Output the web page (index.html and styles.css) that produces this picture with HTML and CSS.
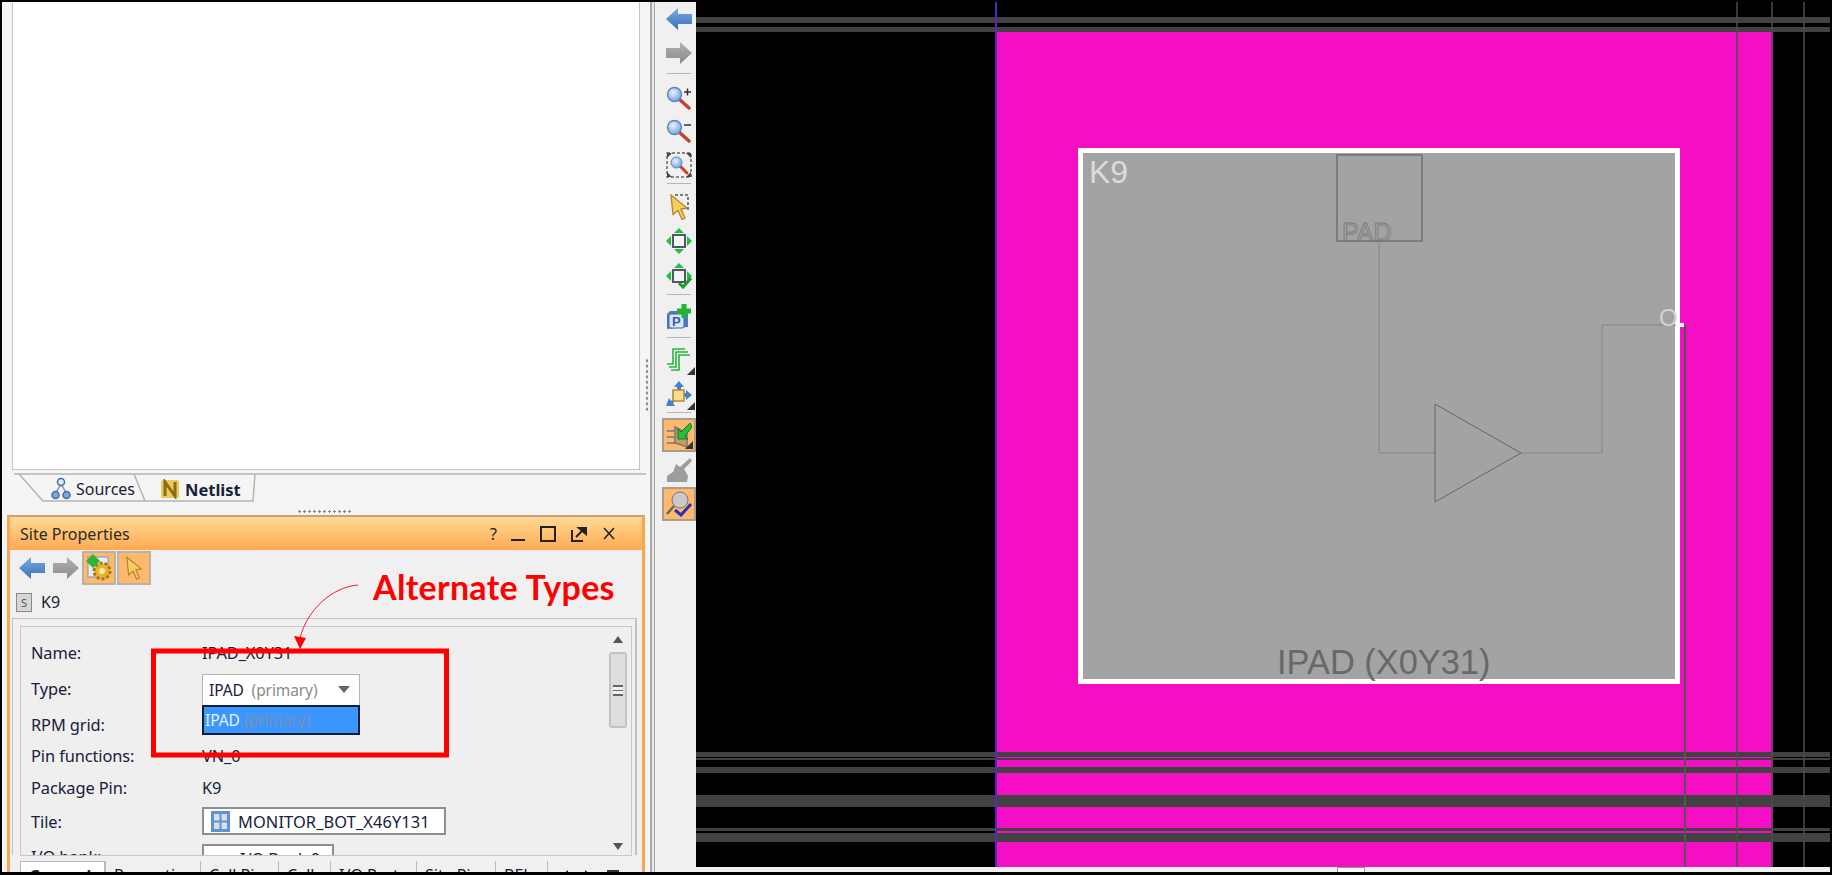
FILE: index.html
```html
<!DOCTYPE html>
<html lang="en">
<head>
    <meta charset="UTF-8">
    <title>Site Properties - Device View</title>
    <link rel="stylesheet" href="styles.css">
</head>
<body>
    <!-- shared icons -->
    <svg class="defs" width="0" height="0">
        <defs>
            <linearGradient id="blueArrow" x1="0" y1="0" x2="0" y2="1"><stop offset="0" stop-color="#79a9e2"/><stop offset="1" stop-color="#3a73b8"/></linearGradient>
            <linearGradient id="grayArrow" x1="0" y1="0" x2="0" y2="1"><stop offset="0" stop-color="#b0b0b0"/><stop offset="1" stop-color="#8c8c8c"/></linearGradient>
            <radialGradient id="lens" cx="0.4" cy="0.35" r="0.7"><stop offset="0" stop-color="#e8f2ff"/><stop offset="1" stop-color="#6f9ee0"/></radialGradient>
            <symbol id="i-back" viewBox="0 0 26 22"><path d="M0 11 12 0v6h14v10H12v6z" fill="url(#blueArrow)"/></symbol>
            <symbol id="i-forward" viewBox="0 0 26 22"><path d="M26 11 14 0v6H0v10h14v6z" fill="url(#grayArrow)"/></symbol>
            <symbol id="i-zoom" viewBox="0 0 26 24">
                <path d="M13 13 23 22" stroke="#c9402c" stroke-width="3.4" stroke-linecap="round"/>
                <circle cx="8.5" cy="8.5" r="7" fill="url(#lens)" stroke="#5b84b8" stroke-width="1.4"/>
            </symbol>
            <symbol id="i-select" viewBox="0 0 20 26"><path d="M2 1 18 14l-6 1 4 9-3 1.500-4-9-5 4z" fill="#f6cf62" stroke="#b5832a" stroke-width="1.300"/></symbol>
        </defs>
    </svg>

    <div class="screen">
        <div class="left-pane">
            <div class="left-stack">
                <div class="blank-view"></div>

                <div class="view-tabs">
                    <svg class="view-tabs-outline" width="640" height="32" viewBox="0 0 640 32">
                        <path d="M2 1H634M7 1 31 28H133L122 1M133 28H241L243 1" fill="none" stroke="#b4b4b4" stroke-width="1.500"/>
                    </svg>
                    <span class="view-tab tab-sources">
                        <svg width="20" height="24" viewBox="0 0 20 24"><path d="M10 7 4 17M10 7l6 10" stroke="#8a9bb0" stroke-width="1.500"/><circle cx="10" cy="5" r="3.500" fill="#dfe8f4" stroke="#3f70ad" stroke-width="1.500"/><circle cx="4.500" cy="18" r="3.500" fill="#7aa6da" stroke="#3f70ad" stroke-width="1.500"/><circle cx="15.500" cy="18" r="3.500" fill="#7aa6da" stroke="#3f70ad" stroke-width="1.500"/></svg>
                        Sources
                    </span>
                    <span class="view-tab tab-netlist">
                        <svg width="20" height="20" viewBox="0 0 20 20"><rect x="1" y="1" width="18" height="18" rx="2" fill="#eccb58"/><path d="M5 17V3l10 14V3" fill="none" stroke="#8a6c14" stroke-width="3"/></svg>
                        Netlist
                    </span>
                </div>

                <div class="h-grip"></div>

                <section class="panel">
                    <header class="panel-title">
                        <span class="panel-name">Site Properties</span>
                        <span class="panel-controls">
                            <span class="panel-help">?</span>
                            <svg width="16" height="18" viewBox="0 0 16 18"><path d="M1 15H15" stroke="#222" stroke-width="2"/></svg>
                            <svg width="18" height="18" viewBox="0 0 18 18"><rect x="2" y="2" width="14" height="14" fill="none" stroke="#222" stroke-width="2"/></svg>
                            <svg width="18" height="18" viewBox="0 0 18 18"><path d="M2 5V16H13" fill="none" stroke="#222" stroke-width="2"/><path d="M6 12 14 4M9 3h7v6z" stroke="#222" stroke-width="2" fill="#222"/></svg>
                            <svg width="16" height="18" viewBox="0 0 16 18"><path d="M3 3 13 14M13 3 3 14" stroke="#222" stroke-width="1.500"/></svg>
                        </span>
                    </header>

                    <div class="panel-toolbar">
                        <svg class="tb-back" width="26" height="22"><use href="#i-back"/></svg>
                        <svg class="tb-forward" width="26" height="22"><use href="#i-forward"/></svg>
                        <span class="toggle">
                            <svg width="28" height="28" viewBox="0 0 28 28">
                                <rect x="3" y="3" width="20" height="20" fill="#e7eef7" stroke="#7f96b5"/>
                                <circle cx="17" cy="17" r="8" fill="#eab52e" stroke="#a57a12" stroke-width="3" stroke-dasharray="3 2"/>
                                <circle cx="17" cy="17" r="3" fill="#fbe9a8"/>
                                <path d="M8 0 15 7 8 14 1 7z" fill="#2fb52f"/>
                            </svg>
                        </span>
                        <span class="toggle">
                            <svg width="18" height="26"><use href="#i-select"/></svg>
                        </span>
                    </div>

                    <div class="site-row">
                        <span class="site-badge">S</span>
                        <span class="site-name">K9</span>
                    </div>

                    <div class="props-outer">
                        <div class="props-inner">
                            <div class="props-grid">
                                <span class="prop-label">Name:</span><span class="prop-value">IPAD_X0Y31</span>
                                <span class="prop-label">Type:</span>
                                <span class="combo-cell">
                                    <span class="combo">IPAD <i class="muted">(primary)</i><b class="combo-arrow"></b></span>
                                    <span class="combo-popup">IPAD <i class="muted">(primary)</i></span>
                                </span>
                                <span class="prop-label">RPM grid:</span><span></span>
                                <span class="prop-label">Pin functions:</span><span class="prop-value">VN_0</span>
                                <span class="prop-label">Package Pin:</span><span class="prop-value">K9</span>
                                <span class="prop-label">Tile:</span>
                                <span class="field field-tile">
                                    <svg width="19" height="21" viewBox="0 0 19 21"><rect width="19" height="21" fill="#5b93d6"/><rect x="3" y="3" width="5.500" height="6.500" fill="#ddd"/><rect x="10.500" y="3" width="5.500" height="6.500" fill="#ddd"/><rect x="3" y="11.500" width="5.500" height="6.500" fill="#ddd"/><rect x="10.500" y="11.500" width="5.500" height="6.500" fill="#ddd"/></svg>
                                    MONITOR_BOT_X46Y131
                                </span>
                                <span class="prop-label">I/O bank:</span>
                                <span class="field field-bank">I/O Bank 0</span>
                            </div>
                            <div class="v-scroll">
                                <b class="scroll-up"></b>
                                <span class="scroll-thumb"><i></i></span>
                                <b class="scroll-down"></b>
                            </div>
                        </div>
                    </div>

                    <div class="panel-tabs">
                        <span class="panel-tab active">General</span>
                        <span class="panel-tab">Properties</span>
                        <span class="panel-tab">Cell Pins</span>
                        <span class="panel-tab">Cells</span>
                        <span class="panel-tab">I/O Ports</span>
                        <span class="panel-tab">Site Pins</span>
                        <span class="panel-tab">BELs</span>
                        <span class="panel-tab tab-nav">
                            <b class="nav-left"></b>
                            <b class="nav-right"></b>
                            <b class="nav-menu"></b>
                        </span>
                    </div>
                </section>
            </div>
            <div class="v-grip-strip"><div class="v-grip"></div></div>
        </div>

        <div class="sash"></div>

        <div class="device-toolbar">
            <span class="tool tool-34"><svg width="26" height="22"><use href="#i-back"/></svg></span>
            <span class="tool tool-34"><svg width="26" height="22"><use href="#i-forward"/></svg></span>
            <span class="tool-sep sep-21"></span>
            <span class="tool tool-zoomin">
                <svg width="26" height="24" viewBox="0 0 26 24"><use href="#i-zoom" width="26" height="24"/><path d="M18 6h7M21.500 2.500v7" stroke="#333" stroke-width="1.500"/></svg>
            </span>
            <span class="tool tool-33">
                <svg width="26" height="24" viewBox="0 0 26 24"><use href="#i-zoom" width="26" height="24"/><path d="M18 6h7" stroke="#333" stroke-width="1.500"/></svg>
            </span>
            <span class="tool tool-fit">
                <svg width="26" height="26" viewBox="0 0 26 26">
                    <rect x="1" y="1" width="24" height="24" fill="none" stroke="#666" stroke-width="1.500" stroke-dasharray="3 2"/>
                    <path d="M1 1h5L1 6zM25 1v5L20 1zM1 25v-5l5 5zM25 25h-5l5-5z" fill="#444"/>
                    <path d="M14 14 21 21" stroke="#c9402c" stroke-width="3" stroke-linecap="round"/>
                    <circle cx="10.500" cy="10.500" r="5.500" fill="url(#lens)" stroke="#5b84b8"/>
                </svg>
            </span>
            <span class="tool-sep sep-19"></span>
            <span class="tool tool-35">
                <svg width="20" height="26" viewBox="0 0 20 26"><use href="#i-select" width="20" height="26"/><path d="M6 1H19V17" fill="none" stroke="#555" stroke-width="1.500" stroke-dasharray="3 2"/></svg>
            </span>
            <span class="tool tool-34">
                <svg width="26" height="26" viewBox="0 0 26 26">
                    <rect x="7" y="7" width="12" height="12" fill="#f4f4f4" stroke="#556" stroke-width="2"/>
                    <path d="M13 0 18 5H8zM13 26 8 21H18zM0 13 5 8V18zM26 13 21 18V8z" fill="#1fc13a"/>
                </svg>
            </span>
            <span class="tool tool-35">
                <svg width="26" height="26" viewBox="0 0 26 26">
                    <rect x="7" y="7" width="12" height="12" fill="#f4f4f4" stroke="#556" stroke-width="2"/>
                    <path d="M13 0 18 5H8zM0 13 5 8V18zM26 13 21 18V8z" fill="#1fc13a"/>
                    <path d="M13 20 17 24 25 15" fill="none" stroke="#12a32a" stroke-width="3"/>
                </svg>
            </span>
            <span class="tool-sep sep-19"></span>
            <span class="tool tool-34">
                <svg width="26" height="26" viewBox="0 0 26 26">
                    <path d="M1 10 4 7H20L22 10V23L1 25z" fill="#4f7cc0"/>
                    <rect x="3" y="10" width="15" height="14" rx="2" fill="#dbe6f6" stroke="#3c68ad"/>
                    <text class="p-glyph" x="6" y="22">P</text>
                    <path d="M18 0V14M11 7H25" stroke="#1fb52f" stroke-width="5"/>
                </svg>
            </span>
            <span class="tool-sep sep-20"></span>
            <span class="tool tool-34 has-corner">
                <svg width="26" height="26" viewBox="0 0 26 26"><path d="M1 18H7V3H19M3 21H10V6H22M5 24H13V9H24" fill="none" stroke="#25b83a" stroke-width="1.600"/></svg>
            </span>
            <span class="tool tool-35 has-corner">
                <svg width="26" height="26" viewBox="0 0 26 26">
                    <path d="M13 0 18 6H15V9H11V6H8zM26 14 20 9V12H17V16H20V19zM0 25 3 17 5 20 9 16 11 18 7 22 9 25z" fill="#3f82d0"/>
                    <rect x="7" y="9" width="11" height="11" fill="#f7dd8d" stroke="#b8862e" stroke-width="1.500"/>
                </svg>
            </span>
            <span class="tool-sep sep-19"></span>
            <span class="tool tool-34 toggle-tool has-corner">
                <svg width="26" height="26" viewBox="0 0 26 26">
                    <path d="M1 9H9M1 15H9M1 21H9" stroke="#8a8a8a" stroke-width="2"/>
                    <path d="M9 5 21 11V25L9 21z" fill="#c89a5e" stroke="#777" stroke-width="1.500"/>
                    <path d="M24 1 15 10 12 7V17H22L19 14 26 5z" fill="#21c13a" stroke="#0f7d20"/>
                </svg>
            </span>
            <span class="tool tool-35">
                <svg width="26" height="26" viewBox="0 0 26 26"><path d="M24 1 14 10 10 7 7 15 1 19V25H21L22 19 18 12 26 4z" fill="#9d9d9d"/></svg>
            </span>
            <span class="tool tool-34 toggle-tool">
                <svg width="26" height="26" viewBox="0 0 26 26">
                    <ellipse cx="14" cy="9" rx="8" ry="8" fill="#c9c9c9" stroke="#777"/>
                    <path d="M8 15 1 23" stroke="#666" stroke-width="2.500"/>
                    <path d="M9 19 15 24 25 13" fill="none" stroke="#2332b8" stroke-width="3"/>
                </svg>
            </span>
        </div>

        <div class="device-view">
            <svg class="device-canvas" width="1134" height="865" viewBox="696 2 1134 865">
                <rect class="site-fill" x="996" y="32" width="777" height="835"/>

                <!-- routing bands -->
                <rect class="band" x="696" y="17" width="1134" height="6"/>
                <rect class="band" x="696" y="27" width="1134" height="5"/>
                <rect class="band" x="696" y="752" width="1134" height="5"/>
                <rect class="band" x="696" y="758" width="1134" height="2"/>
                <rect class="band" x="696" y="767" width="1134" height="6"/>
                <rect class="band" x="696" y="795" width="1134" height="12"/>
                <rect class="band" x="696" y="828" width="1134" height="3"/>
                <rect class="band" x="696" y="833" width="1134" height="9"/>

                <path class="edge-blue" d="M996 2V867"/>
                <path class="wire-v" d="M1737 2V867M1772 2V867M1804 2V867"/>

                <!-- IPAD site -->
                <rect class="site-box" x="1080.500" y="150.500" width="597" height="531"/>
                <path class="wire-v wire-out" d="M1685 325V867"/>
                <rect class="site-dot" x="1678" y="323" width="6" height="4"/>
                <text class="label-k9" x="1089" y="183">K9</text>
                <rect class="pad-box" x="1337" y="155" width="85" height="86"/>
                <text class="label-pad" x="1342" y="241">PAD</text>
                <path class="net" d="M1379 241V453H1435M1521 453H1602V325H1676"/>
                <path class="buf" d="M1435 404V502L1521 453Z"/>
                <text class="label-o" x="1659" y="326">O</text>
                <text class="label-site" x="1277" y="674">IPAD (X0Y31)</text>
            </svg>
            <div class="h-scroll"><span class="h-thumb"></span></div>
        </div>
    </div>

    <!-- annotation over the screenshot -->
    <svg class="annotation" width="1832" height="875" viewBox="0 0 1832 875">
        <path class="note-curve" d="M358 585C332 587 307 610 300 638"/>
        <path class="note-head" d="M294 636 306 638 300 649Z"/>
        <rect class="note-box" x="153.500" y="651" width="293" height="104"/>
    </svg>
    <div class="note-text">Alternate Types</div>
</body>
</html>
```

FILE: styles.css
```css
* {
    box-sizing: border-box;
}

body {
    margin: 0;
    width: 1832px;
    height: 875px;
    overflow: hidden;
    background-color: #000;
    position: relative;
    font-family: "Noto Sans", Arial, sans-serif;
    font-size: 14px;
    color: #16213a;
}

.defs {
    position: absolute;
}

.screen {
    display: flex;
    height: 870px;
    margin: 2px 2px 0 2px;
    overflow: hidden;
}

/* left side */
.left-pane {
    display: flex;
    width: 648px;
    flex: none;
    background-color: #f5f5f5;
}

.left-stack {
    width: 643px;
    padding-left: 5px;
    display: flex;
    flex-direction: column;
}

.blank-view {
    height: 468px;
    margin-left: 5px;
    margin-right: 5px;
    background-color: #fff;
    border: 1px solid #c4c4c4;
    border-top: none;
}

.view-tabs {
    height: 32px;
    margin-top: 3px;
    position: relative;
    display: flex;
    align-items: center;
    padding-top: 0;
    font-size: 16px;
}

.view-tabs-outline {
    position: absolute;
    left: 5px;
    top: 0;
}

.view-tab {
    display: flex;
    align-items: center;
    gap: 5px;
    position: relative;
}

.tab-sources {
    margin-left: 44px;
    width: 109px;
}

.tab-netlist {
    font-size: 16.500px;
    font-weight: 700;
}

.h-grip {
    height: 8px;
    margin-left: 290px;
    width: 54px;
    margin-top: 2px;
    background-image: radial-gradient(circle, #888 1px, transparent 1.300px);
    background-size: 5px 3px;
    background-position: 0 3px;
    background-repeat: repeat-x;
}

.panel {
    flex: 1;
    background-color: #f0f0f0;
    border: 3px solid #f9a64e;
    border-top: 2px solid #c9a070;
    border-bottom: none;
    display: flex;
    flex-direction: column;
    overflow: hidden;
}

.panel-title {
    height: 33px;
    flex: none;
    padding: 0 25px 0 10px;
    display: flex;
    align-items: center;
    justify-content: space-between;
    background: linear-gradient(#ffdb95, #ffa952);
    color: #2a2a2a;
    font-size: 16px;
}

.panel-controls {
    display: flex;
    align-items: center;
    gap: 13px;
}

.panel-help {
    font-size: 16px;
    color: #222;
}

.panel-toolbar {
    height: 36px;
    flex: none;
    display: flex;
    align-items: center;
    padding-left: 9px;
    gap: 1px;
}

.tb-back {
    margin-right: 7px;
}

.tb-forward {
    margin-right: 2px;
}

.toggle {
    width: 34px;
    height: 34px;
    display: flex;
    align-items: center;
    justify-content: center;
    background-color: #ffb96c;
    border: 2px solid #b9b1a6;
}

.site-row {
    height: 32px;
    flex: none;
    display: flex;
    align-items: center;
    gap: 9px;
    padding-left: 6px;
    font-size: 16px;
}

.site-badge {
    width: 16px;
    height: 19px;
    font-size: 11px;
    line-height: 17px;
    text-align: center;
    color: #555;
    background-color: #d6d6d6;
    border: 1px solid #8a8a8a;
}

.props-outer {
    height: 237px;
    flex: none;
    margin-left: 2px;
    margin-right: 5px;
    padding: 7px 3px 0 7px;
    border: 1px solid #c2c2c2;
    border-bottom: none;
    border-right-width: 2px;
}

.props-inner {
    height: 230px;
    display: flex;
    border: 1px solid #c8c8c8;
    background-color: #efefef;
    overflow: hidden;
}

.props-grid {
    flex: 1;
    display: grid;
    grid-template-columns: 171px 1fr;
    grid-template-rows: 36px 36px 36px 26px 38px 30px 40px;
    padding: 7px 0 0 10px;
    align-items: center;
    font-size: 16.400px;
    letter-spacing: -0.100px;
}

.combo-cell {
    position: relative;
    display: block;
    width: 158px;
    height: 31px;
    margin-top: 2px;
    z-index: 1;
}

.combo {
    display: flex;
    align-items: center;
    height: 31px;
    padding-left: 6px;
    gap: 4px;
    background-color: #fff;
    border: 1px solid #b4b4b4;
    border-bottom: none;
    white-space: pre;
    font-size: 15.500px;
}

.muted {
    font-style: normal;
    color: #8a8a8a;
}

.combo-arrow {
    margin-left: auto;
    margin-right: 9px;
    border-top: 7px solid #666;
    border-left: 6px solid transparent;
    border-right: 6px solid transparent;
}

.combo-popup {
    position: absolute;
    left: 0;
    top: 31px;
    width: 158px;
    height: 30px;
    padding-left: 1px;
    line-height: 26px;
    color: #e6f1ff;
    background-color: #3b97ff;
    border: 2px solid #10203a;
    white-space: pre;
    font-size: 15.500px;
}

.combo-popup .muted {
    color: #7d8ea6;
}

.field {
    display: flex;
    align-items: center;
    height: 28px;
    background-color: #fff;
    border: 2px solid #8f8f8f;
}

.field-tile {
    width: 244px;
    padding-left: 7px;
    gap: 8px;
    letter-spacing: 0.100px;
}

.field-bank {
    width: 132px;
    height: 32px;
    margin-top: 8px;
    padding-left: 36px;
    padding-top: 1px;
    align-items: flex-start;
    align-self: start;
}

.v-scroll {
    width: 18px;
    flex: none;
    margin-right: 4px;
    display: flex;
    flex-direction: column;
    align-items: center;
}

.scroll-up {
    margin-top: 9px;
    border-bottom: 7px solid #555;
    border-left: 5px solid transparent;
    border-right: 5px solid transparent;
}

.scroll-thumb {
    width: 18px;
    height: 76px;
    margin-top: 9px;
    display: flex;
    align-items: center;
    justify-content: center;
    background-color: #dedede;
    border: 2px solid #c2c2c2;
    border-radius: 3px;
}

.scroll-thumb i {
    width: 10px;
    height: 11px;
    border-top: 2px solid #666;
    border-bottom: 2px solid #666;
    background: linear-gradient(#f0f0f0 40%, #666 40%, #666 60%, #f0f0f0 60%);
}

.scroll-down {
    margin-top: 115px;
    border-top: 7px solid #555;
    border-left: 5px solid transparent;
    border-right: 5px solid transparent;
}

.panel-tabs {
    flex: none;
    display: grid;
    grid-template-columns: 85px 95px 78px 52px 86px 79px 52px 90px;
    margin-left: 10px;
    height: 30px;
    margin-top: 6px;
    font-size: 16px;
    font-weight: 400;
}

.panel-tab {
    padding: 3px 0 0 8px;
    border-left: 1px solid #bbb;
}

.panel-tab.active {
    font-weight: 700;
    background-color: #fff;
    border: 1px solid #bbb;
}

.tab-nav {
    display: flex;
    align-items: flex-start;
    gap: 17px;
    padding: 9px 0 0 15px;
}

.nav-left,
.nav-right {
    border-top: 4px solid transparent;
    border-bottom: 4px solid transparent;
}

.nav-left {
    border-right: 5px solid #333;
}

.nav-right {
    border-left: 5px solid #333;
}

.nav-menu {
    width: 12px;
    height: 10px;
    border: 2px solid #333;
}

.v-grip-strip {
    width: 5px;
    flex: none;
    padding-top: 356px;
}

.v-grip {
    height: 54px;
    width: 4px;
    background-image: radial-gradient(circle, #888 1.300px, transparent 1.600px);
    background-size: 4px 5.400px;
}

.sash {
    width: 5px;
    flex: none;
    background-color: #e8e8e8;
    border-left: 2px solid #a8a8a8;
    border-right: 1px solid #a8a8a8;
}

/* device toolbar */
.device-toolbar {
    width: 41px;
    flex: none;
    padding-left: 7px;
    display: flex;
    flex-direction: column;
    align-items: center;
    background-color: #f0f0f0;
}

.tool {
    display: flex;
    align-items: center;
    justify-content: center;
    flex: none;
    width: 34px;
    position: relative;
}

.tool-34 {
    height: 34px;
}

.tool-zoomin {
    height: 33px;
    margin-top: 7px;
}

.tool-33 {
    height: 33px;
}

.tool-fit {
    height: 35px;
}

.tool-35 {
    height: 35px;
}

.tool-sep {
    flex: none;
    width: 24px;
    height: 1px;
    background-color: #b5b5b5;
}

.sep-21 {
    margin-top: 3px;
}

.sep-19 {
    margin-top: 1px;
    margin-bottom: 5px;
}

.sep-20 {
    margin-top: 3px;
    margin-bottom: 4px;
}

.has-corner::after {
    content: "";
    position: absolute;
    right: 1px;
    bottom: 1px;
    border-bottom: 8px solid #333;
    border-left: 8px solid transparent;
}

.toggle-tool {
    background-color: #ffb96c;
    border: 2px solid #a89c8d;
}

.p-glyph {
    font-family: "Liberation Sans", Arial, sans-serif;
    font-size: 13px;
    font-weight: 700;
    fill: #2f5ea8;
}

/* device canvas */
.device-view {
    flex: 1;
    display: flex;
    flex-direction: column;
    background-color: #000;
}

.device-canvas {
    display: block;
    flex: none;
}

.h-scroll {
    height: 5px;
    background-color: #f0f0f0;
    position: relative;
}

.h-thumb {
    position: absolute;
    left: 641px;
    top: 0;
    width: 28px;
    height: 5px;
    background-color: #fff;
    border: 1px solid #999;
    border-bottom: none;
}

.site-fill {
    fill: #f40fc4;
}

.band {
    fill: #424242;
}

.edge-blue {
    stroke: #5428b8;
    stroke-width: 2;
    fill: none;
}

.wire-v {
    stroke: #4c4c4c;
    stroke-width: 1.500;
    fill: none;
}

.wire-out {
    stroke: #555;
    stroke-width: 2;
}

.site-box {
    fill: #a3a3a3;
    stroke: #fff;
    stroke-width: 5;
}

.site-dot {
    fill: #fff;
}

.pad-box {
    fill: none;
    stroke: #707070;
    stroke-width: 1.500;
}

.net {
    fill: none;
    stroke: #858585;
    stroke-width: 1;
}

.buf {
    fill: none;
    stroke: #666;
    stroke-width: 1;
}

.label-k9,
.label-pad,
.label-o,
.label-site {
    font-family: "Liberation Sans", Arial, sans-serif;
}

.label-k9 {
    font-size: 32px;
    fill: #dcdcdc;
}

.label-pad {
    font-size: 25px;
    fill: none;
    stroke: #787878;
    stroke-width: 0.800;
}

.label-o {
    font-size: 24px;
    fill: #d2d2d2;
}

.label-site {
    font-size: 34.400px;
    fill: #686868;
}

/* annotation */
.annotation {
    position: absolute;
    left: 0;
    top: 0;
}

.note-curve {
    fill: none;
    stroke: #f2202a;
    stroke-width: 1;
}

.note-head {
    fill: #f00;
}

.note-box {
    fill: none;
    stroke: #f00;
    stroke-width: 5;
}

.note-text {
    position: absolute;
    left: 373px;
    top: 567px;
    font-family: Lato, "Noto Sans", sans-serif;
    font-size: 34px;
    letter-spacing: 0.300px;
    line-height: 40px;
    font-weight: 700;
    color: #f00;
}
```
